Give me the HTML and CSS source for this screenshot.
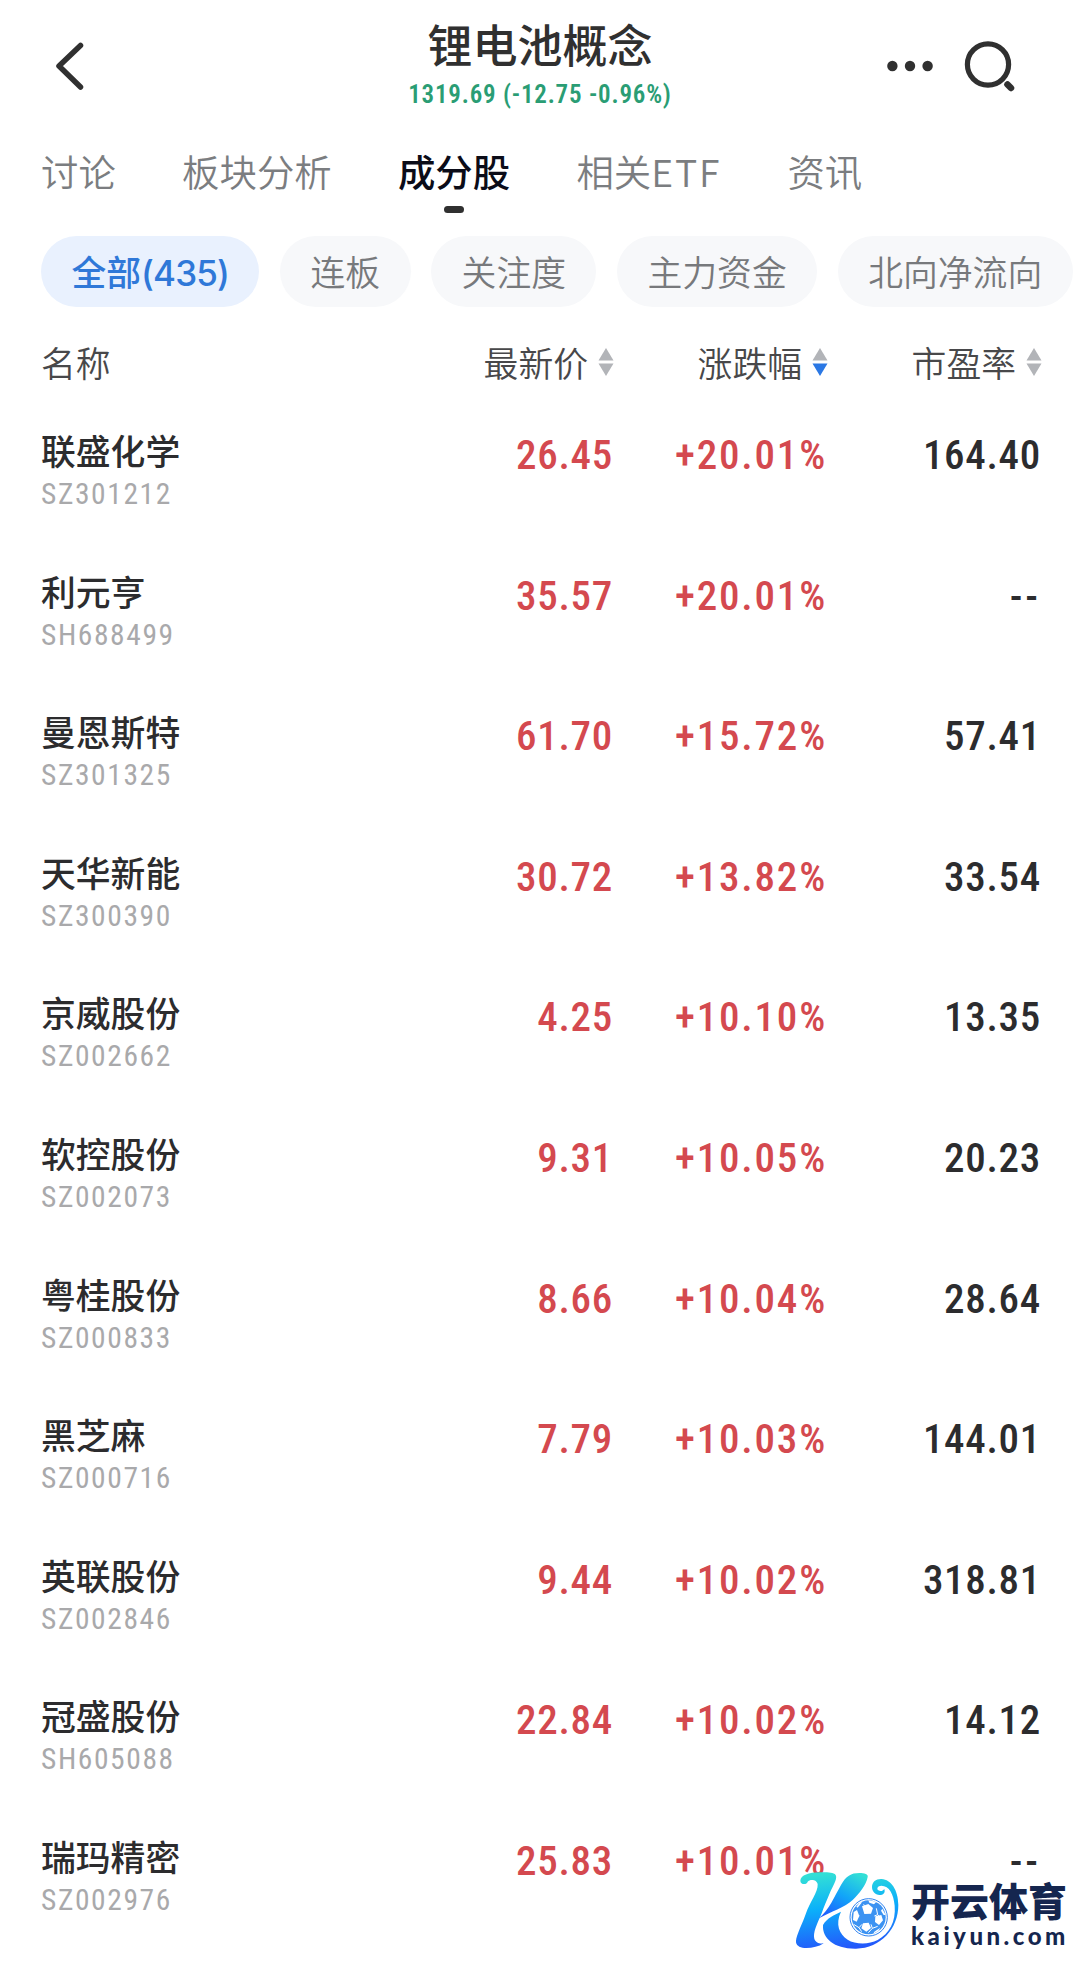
FILE: index.html
```
<!DOCTYPE html>
<html lang="zh-CN">
<head>
  <meta charset="UTF-8" />
  <meta name="viewport" content="width=device-width, initial-scale=1.0" />
  <title>锂电池概念</title>
  <link rel="stylesheet" href="styles.css">
</head>
<body>
  <header class="topbar">
    <svg class="back" viewBox="0 0 34 52" fill="none" stroke="#303030" stroke-width="5.5" stroke-linecap="round" stroke-linejoin="round">
      <path d="M27.5 5.5 L6 26 L27.5 47"/>
    </svg>
    <div class="heading">
      <h1>锂电池概念</h1>
      <p class="index-value">1319.69 (-12.75 -0.96%)</p>
    </div>
    <div class="actions">
      <svg class="more" viewBox="0 0 46 12" fill="#303030">
        <circle cx="5.4" cy="6" r="5.2"/><circle cx="23" cy="6" r="5.2"/><circle cx="40.6" cy="6" r="5.2"/>
      </svg>
      <svg class="search" viewBox="0 0 52 52" fill="none" stroke="#303030" stroke-width="5.2" stroke-linecap="round">
        <circle cx="24" cy="24.5" r="20.6"/><path d="M43.5 44.5 L47 48" stroke-width="6.5"/>
      </svg>
    </div>
  </header>

  <nav class="tabs">
    <a>讨论</a>
    <a>板块分析</a>
    <a class="active">成分股</a>
    <a>相关<span class="latin">ETF</span></a>
    <a>资讯</a>
  </nav>

  <div class="chips">
    <span class="chip selected">全部<span class="count">(435)</span></span>
    <span class="chip">连板</span>
    <span class="chip">关注度</span>
    <span class="chip">主力资金</span>
    <span class="chip">北向净流向</span>
  </div>

  <main class="stocks">
    <div class="row head">
      <span>名称</span>
      <span class="sort">最新价<svg viewBox="0 0 16 28"><path class="up" d="M8 0 L15.5 12.5 H0.5 Z"/><path class="down" d="M8 28 L15.5 15.5 H0.5 Z"/></svg></span>
      <span class="sort desc">涨跌幅<svg viewBox="0 0 16 28"><path class="up" d="M8 0 L15.5 12.5 H0.5 Z"/><path class="down" d="M8 28 L15.5 15.5 H0.5 Z"/></svg></span>
      <span class="sort">市盈率<svg viewBox="0 0 16 28"><path class="up" d="M8 0 L15.5 12.5 H0.5 Z"/><path class="down" d="M8 28 L15.5 15.5 H0.5 Z"/></svg></span>
    </div>
    <div class="row">
      <div class="name">联盛化学<small>SZ301212</small></div>
      <span class="num rise">26.45</span><span class="num rise pct">+20.01%</span><span class="num">164.40</span>
    </div>
    <div class="row">
      <div class="name">利元亨<small>SH688499</small></div>
      <span class="num rise">35.57</span><span class="num rise pct">+20.01%</span><span class="num none">--</span>
    </div>
    <div class="row">
      <div class="name">曼恩斯特<small>SZ301325</small></div>
      <span class="num rise">61.70</span><span class="num rise pct">+15.72%</span><span class="num">57.41</span>
    </div>
    <div class="row">
      <div class="name">天华新能<small>SZ300390</small></div>
      <span class="num rise">30.72</span><span class="num rise pct">+13.82%</span><span class="num">33.54</span>
    </div>
    <div class="row">
      <div class="name">京威股份<small>SZ002662</small></div>
      <span class="num rise">4.25</span><span class="num rise pct">+10.10%</span><span class="num">13.35</span>
    </div>
    <div class="row">
      <div class="name">软控股份<small>SZ002073</small></div>
      <span class="num rise">9.31</span><span class="num rise pct">+10.05%</span><span class="num">20.23</span>
    </div>
    <div class="row">
      <div class="name">粤桂股份<small>SZ000833</small></div>
      <span class="num rise">8.66</span><span class="num rise pct">+10.04%</span><span class="num">28.64</span>
    </div>
    <div class="row">
      <div class="name">黑芝麻<small>SZ000716</small></div>
      <span class="num rise">7.79</span><span class="num rise pct">+10.03%</span><span class="num">144.01</span>
    </div>
    <div class="row">
      <div class="name">英联股份<small>SZ002846</small></div>
      <span class="num rise">9.44</span><span class="num rise pct">+10.02%</span><span class="num">318.81</span>
    </div>
    <div class="row">
      <div class="name">冠盛股份<small>SH605088</small></div>
      <span class="num rise">22.84</span><span class="num rise pct">+10.02%</span><span class="num">14.12</span>
    </div>
    <div class="row">
      <div class="name">瑞玛精密<small>SZ002976</small></div>
      <span class="num rise">25.83</span><span class="num rise pct">+10.01%</span><span class="num none">--</span>
    </div>
  </main>

  <div class="watermark">
    <svg class="mark" viewBox="0 0 360 270">
      <defs>
        <linearGradient id="brand" gradientUnits="userSpaceOnUse" x1="150" y1="22" x2="175" y2="250">
          <stop offset="0" stop-color="#32dfd6"/>
          <stop offset="0.45" stop-color="#0bb0fa"/>
          <stop offset="1" stop-color="#2456fb"/>
        </linearGradient>
        <linearGradient id="arm" x1="0.8" y1="0" x2="0.2" y2="1">
          <stop offset="0" stop-color="#32dfd6"/>
          <stop offset="0.5" stop-color="#12a5f8"/>
          <stop offset="1" stop-color="#1f5cff"/>
        </linearGradient>
      </defs>
      <path fill="url(#brand)" d="M50 50 C48 60 28 60 28 47 C28 31 55 22 85 22 C105 22 127 21 134 30 C140 40 128 60 118 80 C108 105 98 125 92 145 C84 165 68 195 69 215 C70 232 85 237 98 235 C82 246 60 250 40 249 C25 248 14 240 15 228 C16 210 35 175 45 145 C55 115 82 80 80 58 C78 42 56 42 50 50 Z"/>
      <path fill="url(#brand)" d="M96 180 C108 158 130 150 150 140 C132 178 145 207 170 224 C192 238 232 240 260 225 C295 205 315 170 311 122 C308 88 295 62 271 62 C260 62 256 71 262 76 C268 80 276 78 280 72 C284 84 276 90 266 90 C252 90 243 78 243 66 C243 50 256 41 272 42 C300 44 322 75 322 120 C322 190 270 250 195 251 C130 252 93 220 96 180 Z"/>
      <path fill="url(#arm)" d="M84 160 C115 133 130 95 150 60 C165 33 180 24 205 24 C220 24 233 28 230 36 C226 60 205 85 185 105 C163 127 118 140 84 160 Z"/>
      <circle cx="233" cy="157" r="56" fill="#fff" stroke="#2f83f0" stroke-width="3"/>
      <circle cx="233" cy="157" r="51" fill="#3c93f2"/>
      <g stroke="#fff" stroke-width="3" fill="none">
        <path d="M227 137 L218 118 M250 153 L260 149 M240 178 L244 190 M213 178 L204 188 M205 152 L190 148 M204 188 L188 178 M204 188 L212 200 M244 190 L260 184 M244 190 L232 203 M260 149 L256 130 M260 149 L268 158"/>
      </g>
      <path fill="#fff" d="M213 124 L232 117 L246 129 L240 146 L220 147 Z M253 154 L271 150 L276 166 L264 180 L252 171 Z M216 175 L233 173 L240 189 L226 200 L211 190 Z M188 141 L198 135 L205 153 L197 170 L186 165 Z M232 106 L256 110 L249 118 L235 113 Z M274 131 L284 150 L278 150 L270 137 Z M250 200 L268 188 L262 198 L247 206 Z M196 125 L207 112 L213 112 L200 128 Z"/>
    </svg>
    <div class="brand">
      <strong>开云体育</strong>
      <span>kaiyun.com</span>
    </div>
  </div>
</body>
</html>
```
FILE: styles.css
```
* {
  box-sizing: border-box;
}
body {
  margin: 0;
  height: 1970px;
  overflow: hidden;
  position: relative;
  background: #fff;
  color: #2c2c2e;
  font-family: "Noto Sans CJK SC", sans-serif;
}
h1, p {
  margin: 0;
}
.topbar {
  height: 130px;
  padding: 0 64px 0 53px;
  display: grid;
  grid-template-columns: 140px 1fr 129px;
  align-items: start;
}
.back {
  width: 34px;
  height: 52px;
  margin-top: 40px;
}
.heading {
  text-align: center;
  padding-top: 19px;
}
h1 {
  font-size: 45px;
  line-height: 50px;
  font-weight: 500;
  color: #303030;
}
.index-value {
  margin-top: 11px;
  font-family: "Roboto Condensed", Roboto, sans-serif;
  font-size: 25px;
  line-height: 29px;
  font-weight: 600;
  letter-spacing: 0.8px;
  color: #2a9d74;
}
.actions {
  display: flex;
  justify-content: space-between;
  align-items: center;
  padding-top: 40px;
}
.more {
  width: 46px;
  height: 12px;
}
.search {
  width: 52px;
  height: 52px;
}
.tabs {
  height: 106px;
  padding: 13px 41px 0;
  display: flex;
  gap: 66.3px;
  font-size: 37.4px;
  line-height: 56px;
  font-weight: 350;
  color: #7b7d80;
  white-space: nowrap;
}
.tabs .active {
  font-weight: 500;
  color: #0b0c18;
}
.tabs .active::after {
  content: "";
  display: block;
  width: 20px;
  height: 7px;
  margin: 7px auto 0;
  border-radius: 4px;
  background: #303030;
}
.latin {
  letter-spacing: 1.8px;
}
.chips {
  display: flex;
  gap: 20.5px;
  padding-left: 41px;
  white-space: nowrap;
}
.chip {
  height: 71px;
  padding: 0 30.5px;
  border-radius: 36px;
  background: #f7f8fa;
  color: #77797c;
  font-size: 34.8px;
  line-height: 71px;
  font-weight: 350;
}
.chip.selected {
  background: #e9f1fe;
  color: #2f78d8;
  font-weight: 500;
}
.count {
  font-family: Inter, "Liberation Sans", sans-serif;
  font-size: 35px;
  letter-spacing: -0.9px;
}
.row {
  display: grid;
  grid-template-columns: 1fr 214px 214px 214px;
  height: 140.6px;
  padding: 0 39px 0 41px;
}
.row.head {
  height: 113px;
  padding-top: 28px;
  padding-right: 38px;
  font-size: 34.8px;
  line-height: 54px;
  font-weight: 350;
  color: #48484a;
}
.sort {
  display: flex;
  justify-content: flex-end;
  align-items: center;
  gap: 10px;
}
.row.head > span {
  height: 54px;
}
.sort svg {
  width: 16px;
  height: 28px;
  fill: #b2b4b8;
}
.sort.desc .down {
  fill: #2b78e4;
}
.name {
  padding-top: 5px;
  font-size: 34.8px;
  line-height: 50px;
  font-weight: 500;
}
.name small {
  display: block;
  padding-top: 2px;
  font-family: "Roboto Condensed", Roboto, sans-serif;
  font-size: 29.5px;
  line-height: 35px;
  font-weight: 400;
  letter-spacing: 1.6px;
  color: #a9a9ab;
}
.num {
  padding-top: 10px;
  text-align: right;
  font-family: "Roboto Condensed", Roboto, sans-serif;
  font-size: 41px;
  line-height: 50px;
  font-weight: 480;
  letter-spacing: 0.7px;
}
.pct {
  letter-spacing: 1.8px;
}
.rise {
  color: #d4494f;
}
.none {
  letter-spacing: 3px;
}
/* site mark sits over the last row */
.watermark {
  position: absolute;
  left: 791px;
  top: 1865px;
  display: flex;
}
.mark {
  width: 120px;
  height: 90px;
}
.brand {
  color: #15264f;
  white-space: nowrap;
  padding-top: 10px;
}
.brand strong {
  display: block;
  font-size: 39px;
  line-height: 48px;
  font-weight: 900;
}
.brand span {
  display: block;
  font-family: Lato, sans-serif;
  font-size: 24px;
  line-height: 26px;
  font-weight: 900;
  letter-spacing: 3.5px;
}
```
